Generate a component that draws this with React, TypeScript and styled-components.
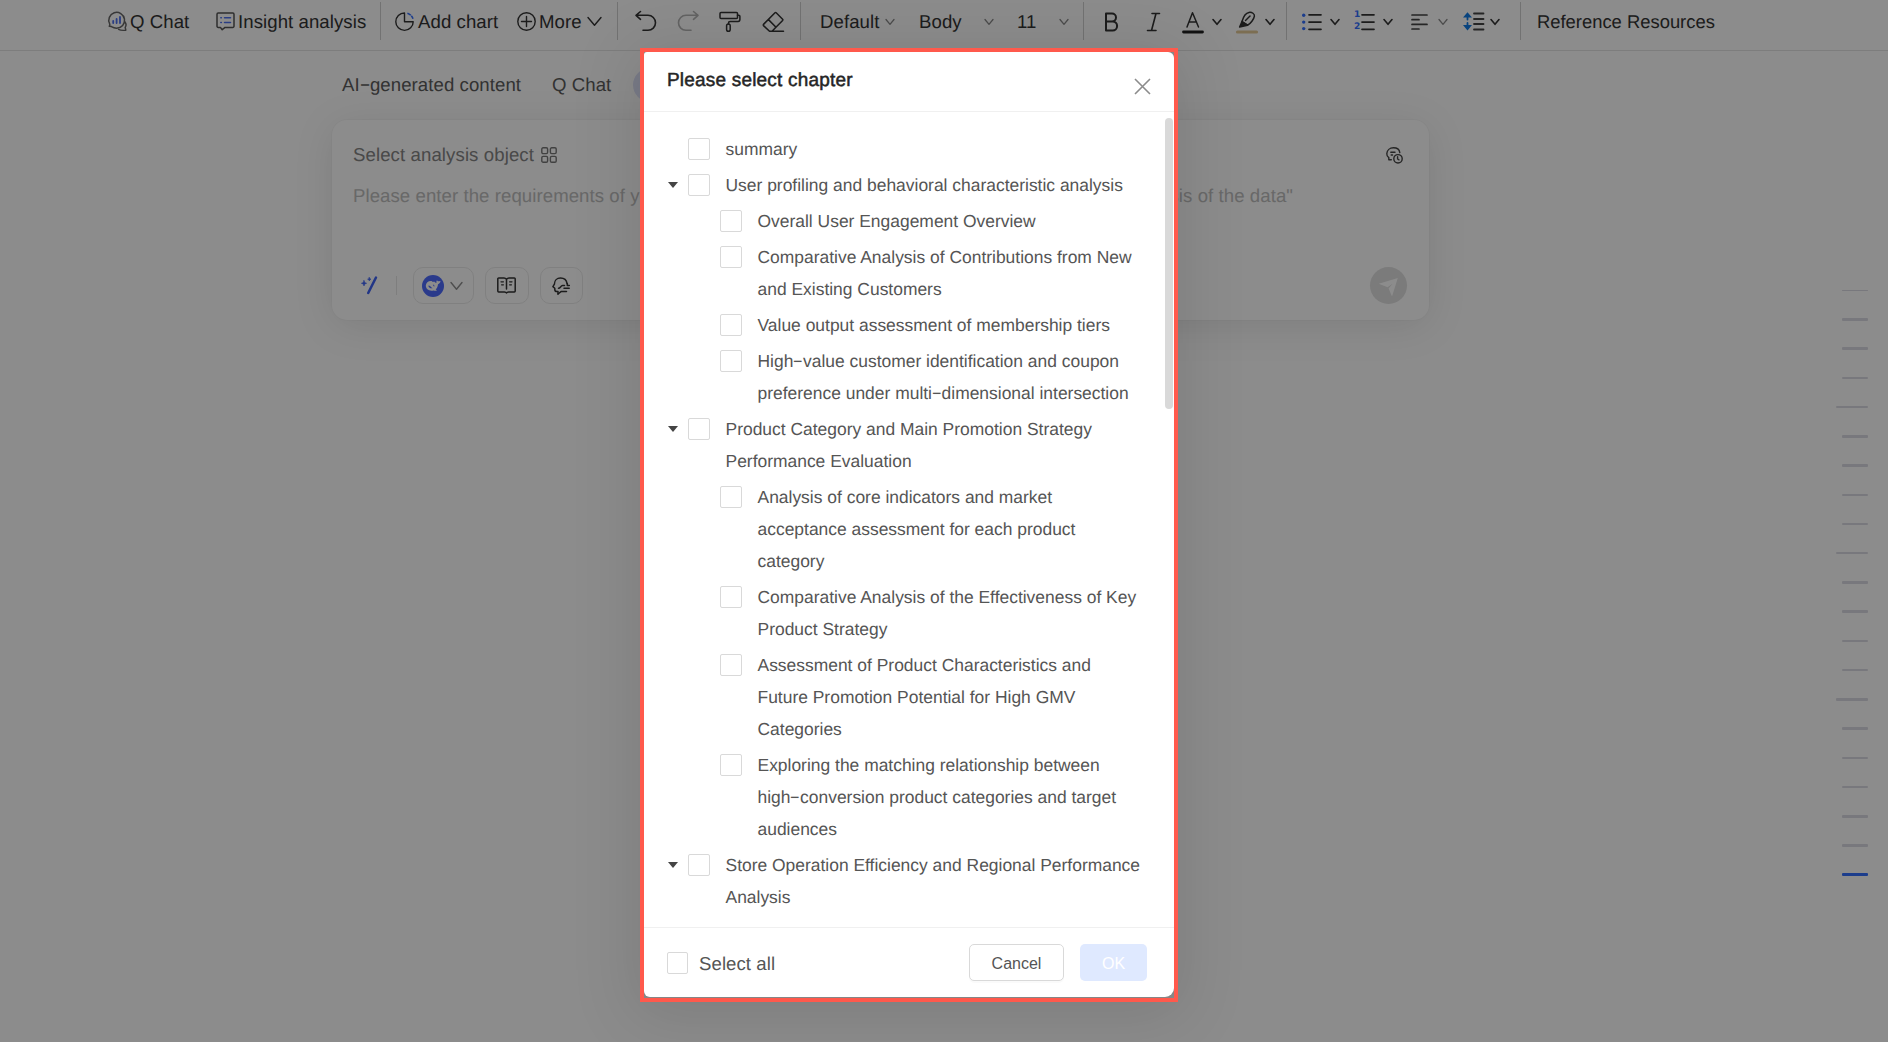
import React from "react";
import styled, { createGlobalStyle } from "styled-components";

const GlobalStyle = createGlobalStyle`
  * { box-sizing: border-box; }
  html, body { margin: 0; padding: 0; }
  body {
    background: #fff;
    overflow: hidden;
    font-family: "Liberation Sans", Arial, Helvetica, sans-serif;
    font-size: 18.6px;
    letter-spacing: 0.07px;
    color: #333;
    text-rendering: geometricPrecision;
  }
  svg { display: block; flex: none; overflow: visible; }
`;

const Page = styled.div`
  position: relative;
  width: 1888px;
  height: 1042px;
  overflow: hidden;
  display: flex;
  flex-direction: column;
`;

const Toolbar = styled.header`
  height: 51px;
  flex: none;
  display: flex;
  align-items: center;
  padding-bottom: 7px;
  border-bottom: 1px solid #e4e4e4;
`;

const Tool = styled.div<{ $w: number; $ml: number }>`
  flex: none;
  width: ${(p) => p.$w}px;
  margin-left: ${(p) => p.$ml}px;
  white-space: nowrap;
  line-height: 24px;
`;

const ReferenceLink = styled.a`
  margin-left: 16px;
  line-height: 24px;
  font-size: 18.4px;
  letter-spacing: 0;
  white-space: nowrap;
`;

const Divider = styled.i<{ $ml: number }>`
  flex: none;
  align-self: flex-start;
  width: 1px;
  height: 38px;
  margin: 2px 0 0 ${(p) => p.$ml}px;
  background: #d0d0d0;
`;

const Stage = styled.main`
  flex: 1;
  display: flex;
  justify-content: space-between;
  padding: 0 20px 0 332px;
`;

const Editor = styled.section`
  width: 1097px;
`;

const Tabs = styled.nav`
  height: 69px;
  display: flex;
  align-items: center;
  padding: 0 0 2px 10px;
  color: #5c5c5c;
`;

const Tab = styled.span<{ $w: number }>`
  width: ${(p) => p.$w}px;
  white-space: nowrap;
`;

const ActivePill = styled.span`
  width: 120px;
  height: 34px;
  border-radius: 17px;
  background: #dde0f6;
`;

const Card = styled.div`
  height: 200px;
  border-radius: 15px;
  background: #fff;
  box-shadow: 0 0 0 1px rgba(0, 0, 0, 0.02), 0 6px 40px rgba(0, 0, 0, 0.1);
  padding: 23px 22px 15px 21px;
  display: flex;
  flex-direction: column;
`;

const CardRow = styled.div<{ $h: number }>`
  display: flex;
  justify-content: space-between;
  align-items: center;
  height: ${(p) => p.$h}px;
  white-space: nowrap;
`;

const ObjectPicker = styled.span`
  display: flex;
  align-items: center;
  gap: 7px;
  color: #858585;
  letter-spacing: 0.1px;
`;

const HistoryButton = styled.span`
  padding-right: 4px;
`;

const Placeholder = styled.div`
  margin-top: 17px;
  height: 24px;
  line-height: 24px;
  display: flex;
  justify-content: space-between;
  padding-right: 114px;
  white-space: nowrap;
  color: #bdbdbd;
  letter-spacing: 0.07px;
`;

const CardActions = styled.div`
  margin-top: auto;
  height: 39px;
  display: flex;
  align-items: center;
`;

const Wand = styled.span`
  width: 44px;
  padding-left: 8px;
  border-right: 1px solid #e6e6e6;
`;

const Chip = styled.span<{ $w: number; $ml: number }>`
  width: ${(p) => p.$w}px;
  height: 37px;
  margin-left: ${(p) => p.$ml}px;
  padding-right: 2px;
  border: 1px solid #eaeaea;
  border-radius: 10px;
  display: flex;
  align-items: center;
  justify-content: center;
  gap: 6px;
`;

const SendButton = styled.span`
  width: 37px;
  height: 37px;
  border-radius: 50%;
  margin-left: auto;
  background: #e0e0e0;
  display: flex;
  align-items: center;
  justify-content: center;
`;

const Rail = styled.aside`
  padding-top: 224.5px;
  display: flex;
  flex-direction: column;
  align-items: flex-end;
`;

const RailMark = styled.div<{ $long?: boolean; $active?: boolean; $thin?: boolean }>`
  height: 29.24px;
  width: ${(p) => (p.$long ? 32 : 26)}px;
  display: flex;
  align-items: center;
  &::before {
    content: "";
    width: 100%;
    height: ${(p) => (p.$thin ? 1 : p.$active ? 3 : 2.5)}px;
    border-radius: 1px;
    background: ${(p) => (p.$active ? "#3370ff" : "#dbdbe3")};
  }
`;

const Mask = styled.div`
  position: absolute;
  inset: 0;
  background: rgba(0, 0, 0, 0.45);
  padding: 48px 0 0 640px;
`;

const Highlight = styled.div`
  width: 538px;
  height: 954px;
  border: 4px solid #ff594c;
  background: #868686;
  box-shadow: 0 8px 60px 8px rgba(0, 0, 0, 0.1);
`;

const Dialog = styled.div`
  width: 530px;
  height: 945px;
  border-radius: 3px 6px 9px 6px;
  background: #fff;
  display: flex;
  flex-direction: column;
  overflow: hidden;
`;

const DialogHeader = styled.div`
  height: 60px;
  flex: none;
  display: flex;
  justify-content: space-between;
  padding: 17px 23px 0 23px;
  border-bottom: 1px solid #f0f0f0;
`;

const Title = styled.h2`
  margin: 0;
  font-size: 19px;
  line-height: 24px;
  font-weight: 400;
  letter-spacing: 0.19px;
  color: #262626;
  -webkit-text-stroke: 0.5px #262626;
`;

const CloseIcon = styled.svg`
  margin-top: 9px;
`;

const DialogBody = styled.div`
  flex: 1;
  min-height: 0;
  display: flex;
  justify-content: space-between;
  padding: 21px 1px 0 23px;
`;

const Tree = styled.ul`
  list-style: none;
  margin: 0;
  padding: 0;
  display: flex;
  flex-direction: column;
  gap: 4px;
`;

const TreeRow = styled.li<{ $child?: boolean }>`
  display: flex;
  align-items: flex-start;
  padding-left: ${(p) => (p.$child ? 32 : 0)}px;
`;

const Caret = styled.span<{ $open?: boolean }>`
  width: 21px;
  height: 32px;
  display: flex;
  align-items: center;
  &::before {
    content: "";
    margin-left: 1px;
    border: 5px solid transparent;
    border-top: 6px solid ${(p) => (p.$open ? "#444" : "transparent")};
    border-bottom: 0;
  }
`;

const Checkbox = styled.span`
  flex: none;
  width: 22px;
  height: 22px;
  margin: 5px 15.5px 0 0;
  border: 1px solid #d9d9d9;
  border-radius: 2px;
  background: #fff;
`;

const Label = styled.span`
  font-size: 17.45px;
  line-height: 32px;
  letter-spacing: 0;
  color: #555;
`;

const Line = styled.span`
  display: block;
  white-space: nowrap;
`;

const Hyphen = styled.span`
  display: inline-block;
  width: 0.55em;
  text-align: center;
  transform: translateY(-1px) scaleX(1.8);
`;

const ScrollThumb = styled.div`
  width: 8px;
  height: 291px;
  margin-top: -15px;
  border-radius: 4px;
  background: #d9d9d9;
`;

const DialogFooter = styled.div`
  height: 70px;
  flex: none;
  display: flex;
  align-items: flex-start;
  padding: 16px 27px 0 23px;
  border-top: 1px solid #f0f0f0;
`;

const SelectAll = styled.label`
  display: flex;
  align-items: center;
  gap: 11px;
  height: 38px;
  color: #555;
  margin-right: auto;
`;

const SelectAllText = styled.span`
  padding-top: 2px;
`;

const FooterCheckbox = styled(Checkbox)`
  width: 21px;
  margin: 0;
`;

const Button = styled.button<{ $primary?: boolean }>`
  width: ${(p) => (p.$primary ? 67 : 95)}px;
  height: 37px;
  margin-left: ${(p) => (p.$primary ? 16 : 0)}px;
  padding: 2px 0 0;
  border: ${(p) => (p.$primary ? "0" : "1px solid #d9d9d9")};
  border-radius: 5px;
  background: ${(p) => (p.$primary ? "#dfe9ff" : "#fff")};
  color: ${(p) => (p.$primary ? "#fff" : "#555")};
  box-shadow: ${(p) => (p.$primary ? "none" : "0 2px 0 rgba(0, 0, 0, 0.02)")};
  font-family: inherit;
  font-size: 16px;
`;

const INK = "#333";
const BLUE = "#3370ff";
const GREY = "#8a8a8a";

const Svg = ({ w, h, children, stroke = INK, sw = 1.5 }: {
  w: number; h: number; children: React.ReactNode; stroke?: string; sw?: number;
}) => (
  <svg width={w} height={h} viewBox={`0 0 ${w} ${h}`} fill="none" stroke={stroke}
    strokeWidth={sw} strokeLinecap="round" strokeLinejoin="round">{children}</svg>
);

const Chevron = ({ w = 10, h = 6, color = INK, sw = 1.6 }) => (
  <Svg w={w} h={h} stroke={color} sw={sw}><path d={`M1 .5 L${w / 2} ${h - 0.7} L${w - 1} .5`} /></Svg>
);

const QChatIcon = () => (
  <Svg w={19} h={19} stroke="#666">
    <path d="M3.4 14.6 L1.2 14.2 C2 13.4 2 12.8 1.7 12 A7.9 7.9 0 1 1 8.6 16.2 C6.6 16.2 5 15.6 3.4 14.6" />
    <path d="M16.6 9.6 C18.4 11.6 18.4 13.6 17.2 15.4 L17.8 18.2 C14.6 18.6 12.4 18.4 10.6 17.4" />
    <path d="M5.2 9v2M8.6 7v4M12 5v6" stroke="#4c6ff0" strokeWidth="1.8" />
  </Svg>
);

const InsightIcon = () => (
  <Svg w={19} h={19} stroke="#555">
    <path d="M2.2 1h14.6a1.2 1.2 0 0 1 1.2 1.2v12a1.2 1.2 0 0 1-1.2 1.2H9l-2.8 2.4-1.8-2.4H2.2A1.2 1.2 0 0 1 1 14.2V2.2A1.2 1.2 0 0 1 2.2 1z" />
    <path d="M4.8 5.8h.6M8.5 5.8h6M4.8 10.4h.6M8.5 10.4h6" stroke="#4c6ff0" />
  </Svg>
);

const PieIcon = () => (
  <Svg w={19} h={19} sw={1.4}>
    <path d="M9.5 1V9.7H18.2A8.7 8.7 0 1 1 9.5 1" />
    <path d="M12.4 1.2A8.8 8.8 0 0 1 18 6.8" stroke={BLUE} strokeWidth="1.6" strokeDasharray="4 .7" strokeLinecap="butt" />
  </Svg>
);

const PlusIcon = () => (
  <Svg w={19} h={19} sw={1.4}><circle cx="9.5" cy="9.5" r="8.7" /><path d="M9.5 4.5v10M4.5 9.5h10" /></Svg>
);

const UndoIcon = () => (
  <Svg w={22} h={21} sw={1.6}><path d="M5.5 .5 L1 4.3 L5.5 8.3 M1.2 4.3H13a7.5 7.5 0 0 1 0 15H8" /></Svg>
);

const RedoIcon = () => (
  <Svg w={22} h={21} sw={1.6} stroke="#b4b4b4"><path d="M16.5 .5 L21 4.3 L16.5 8.3 M20.8 4.3H9a7.5 7.5 0 0 0 0 15H14" /></Svg>
);

const RollerIcon = () => (
  <Svg w={22} h={21}>
    <rect x="1" y="1.5" width="17.5" height="6" rx="1" />
    <path d="M18.5 4.2h1.2a1.2 1.2 0 0 1 1.2 1.2v3.2a1.8 1.8 0 0 1-1.8 1.8h-8a1.6 1.6 0 0 0-1.6 1.6v1" />
    <rect x="7.6" y="13" width="3.6" height="7.2" rx="1.8" />
  </Svg>
);

const EraserIcon = () => (
  <Svg w={22} h={22}>
    <path d="M7.5 20.3 L1.5 14.6 a.9.9 0 0 1 0-1.2 L13 1.8 a.9.9 0 0 1 1.2 0 L20.6 8.2 a.9.9 0 0 1 0 1.2 L10 20.3 M7.5 20.3H21.5M6.5 8.6 L14 16.2" />
  </Svg>
);

const BoldIcon = () => (
  <Svg w={14} h={20} sw={2}><path d="M2 1.5H8a3.9 3.9 0 0 1 0 8H2zM2 9.5H8.6a4.4 4.4 0 0 1 0 9H2z" /></Svg>
);

const ItalicIcon = () => (
  <Svg w={13} h={20} sw={1.6}><path d="M5 1.5H12.5M.5 18.5H9M9 1.5L4.5 18.5" /></Svg>
);

const FontColorIcon = () => (
  <Svg w={22} h={22}>
    <path d="M5 16 L10.5 1.8 L16.5 16M7 11H14.5" />
    <path d="M1.5 21H20.5" strokeWidth="2.8" stroke="#222" />
  </Svg>
);

const HighlightIcon = () => (
  <Svg w={22} h={22}>
    <path d="M6 10.5 C7.5 5 10.5 1.8 13 1.4 C16 1 18.8 2.8 18.4 5.2 C18 8 14.5 12.8 11.5 14.2 Z" />
    <path d="M6 10.5 L3.6 16 L11.5 14.2 Z" fill={INK} />
    <path d="M9.5 9.5L14 5" />
    <path d="M1.5 21H20.5" strokeWidth="3.2" stroke="#e2c896" />
  </Svg>
);

const BulletListIcon = () => (
  <Svg w={20} h={18} sw={1.7}>
    <path d="M7 1.8H19M7 9.1H19M7 16.3H19" />
    <g fill={BLUE} stroke="none"><circle cx="1.7" cy="2.3" r="1.7" /><circle cx="1.7" cy="9.1" r="1.7" /><circle cx="1.7" cy="15.6" r="1.7" /></g>
  </Svg>
);

const Digits = styled.div`
  display: flex;
  flex-direction: column;
  justify-content: space-between;
  height: 21px;
  width: 7px;
  font: bold 9px/9px "DejaVu Sans", sans-serif;
  color: ${BLUE};
`;

const NumberedList = styled.div`
  display: flex;
  align-items: center;
`;

const AlignIcon = () => (
  <Svg w={17} h={16} stroke="#444" sw={1.7}><path d="M1 1H16M1 5.7H8M1 10.4H16M1 15H8" /></Svg>
);

const LineHeightIcon = () => (
  <Svg w={21} h={19} sw={1.8}>
    <path d="M11 1.5H20.5M11 7H20.5M11 12H20.5M11 17.5H20.5" stroke="#444" />
    <path d="M4.5 4.5V7.5M4.5 11V14.5" stroke="#0f7ae5" />
    <path d="M0 5.6L4.5 .3L9 5.6zM0 13L4.5 18.4L9 13z" fill="#0f7ae5" stroke="none" />
  </Svg>
);

const ObjectIcon = () => (
  <Svg w={16} h={16} stroke="#777" sw={1.4}>
    <rect x=".8" y=".8" width="5.8" height="5.8" rx="1.3" /><rect x="9.4" y=".8" width="5.8" height="5.8" rx="1.3" />
    <rect x=".8" y="9.4" width="5.8" height="5.8" rx="1.3" /><rect x="9.4" y="9.4" width="5.8" height="5.8" rx="1.3" />
  </Svg>
);

const HistoryIcon = () => (
  <Svg w={17} h={17} stroke="#444" sw={1.4}>
    <path d="M5.3 12.8H2.8V10.6C1.4 9.6 .7 8.3 .8 6.6C1 3.2 3.8 .8 7.4 .8C10.8 .8 13.4 2.8 13.8 5.6" />
    <path d="M4.8 5.2H9M5.2 8H6.5" />
    <circle cx="12" cy="11.8" r="4.2" /><path d="M11.6 9.8V12L13 12.8" />
  </Svg>
);

const WandIcon = () => (
  <Svg w={18} h={19} stroke="#3f63f5" sw={0.6}>
    <path d="M15 1.5L7.2 17" strokeWidth="2.5" />
    <path d="M3 4.6L3.7 6.6L5.6 7.3L3.7 8L3 10L2.3 8L.4 7.3L2.3 6.6ZM8.3 1.5L8.8 2.7L10 3.2L8.8 3.7L8.3 4.9L7.8 3.7L6.6 3.2L7.8 2.7Z" fill="#3f63f5" />
  </Svg>
);

const WhaleIcon = () => (
  <svg width="22" height="22" viewBox="0 0 22 22">
    <circle cx="11" cy="11" r="11" fill="#4d6bfe" />
    <path d="M3.8 10.5C4 7.5 6.5 5.6 9.6 6L10.9 6.9L12.2 6.5C12.8 7 13.5 7.9 14.5 8.1C14.2 6.9 14.4 6 15 5.2C15.5 6 16 6.4 16.7 6.2L18.5 5.9C18.3 7.7 17.3 8.6 16 9.2C15.8 11.5 15 13.2 13.7 14.3L14.9 15.5C13.6 16 12.5 15.8 11.6 15.4C7.5 16.6 3.7 14.2 3.8 10.5Z" fill="#fff" />
    <path d="M6.4 10.4C8.2 10.4 9 12.4 10.6 13.3C8.200 13.600 6.300 12.300 6.400 10.400Z" fill="#4d6bfe" />
    <path d="M10.8 9.8C11.700 9.500 12.500 10.200 12.600 11.200L11.900 11.500Z" fill="#4d6bfe" />
  </svg>
);

const BookIcon = () => (
  <Svg w={19} h={17}>
    <path d="M9.5 2.2C8.8 1.3 8 .9 7 .9H1.7a.9.9 0 0 0-.9.9V14a.9.9 0 0 0 .9.9H7.5C8.5 14.9 9.2 15.3 9.5 16C9.8 15.3 10.5 14.9 11.5 14.9H17.3a.9.9 0 0 0 .9-.9V1.8a.9.9 0 0 0-.9-.9H12C11 .9 10.2 1.3 9.5 2.2ZM9.5 2.2V12" />
    <path d="M4 4.8H6.4M4.6 7.8H6.4M12.6 4.8H15M12.6 7.8H14.4" strokeWidth="1.3" />
  </Svg>
);

const ThinkIcon = () => (
  <Svg w={18} h={18}>
    <path d="M6 17V14.6H5A2.2 2.2 0 0 1 2.8 12.4V11.2L.9 9.6L2.4 7.2C2.4 3.5 5 1 8.5 1C12 1 14.6 3.3 15 6.5" />
    <path d="M15.3 6.5V8.5H17.3M12 11.3H17.2M6.5 11.3C8.5 11.3 8.6 8.6 10.6 8.6H12.5M6 17L9 14.6H14.5" />
  </Svg>
);

const SendIcon = () => (
  <svg width="20" height="20" viewBox="0 0 20 20" fill="#fff">
    <path d="M-.3 7.8L18.8 2L13 20.5L9.6 12.6L13.5 7.8L8.6 11.3Z" />
  </svg>
);

const chapters: { lines: string[]; child?: boolean; open?: boolean }[] = [
  { lines: ["summary"] },
  { lines: ["User profiling and behavioral characteristic analysis"], open: true },
  { lines: ["Overall User Engagement Overview"], child: true },
  { lines: ["Comparative Analysis of Contributions from New", "and Existing Customers"], child: true },
  { lines: ["Value output assessment of membership tiers"], child: true },
  { lines: ["High-value customer identification and coupon", "preference under multi-dimensional intersection"], child: true },
  { lines: ["Product Category and Main Promotion Strategy", "Performance Evaluation"], open: true },
  { lines: ["Analysis of core indicators and market", "acceptance assessment for each product", "category"], child: true },
  { lines: ["Comparative Analysis of the Effectiveness of Key", "Product Strategy"], child: true },
  { lines: ["Assessment of Product Characteristics and", "Future Promotion Potential for High GMV", "Categories"], child: true },
  { lines: ["Exploring the matching relationship between", "high-conversion product categories and target", "audiences"], child: true },
  { lines: ["Store Operation Efficiency and Regional Performance", "Analysis"], open: true },
];

const WithHyphens = ({ text }: { text: string }) => (
  <>
    {text.split("-").map((part, i) => (
      <React.Fragment key={i}>{i > 0 && <Hyphen>-</Hyphen>}{part}</React.Fragment>
    ))}
  </>
);

export default function App() {
  return (
    <>
      <GlobalStyle />
      <Page>
        <Toolbar>
          <Tool $ml={108} $w={19}><QChatIcon /></Tool>
          <Tool $ml={3} $w={60}>Q Chat</Tool>
          <Tool $ml={26} $w={19}><InsightIcon /></Tool>
          <Tool $ml={3} $w={129}>Insight analysis</Tool>
          <Divider $ml={13} />
          <Tool $ml={14} $w={19}><PieIcon /></Tool>
          <Tool $ml={4} $w={82}>Add chart</Tool>
          <Tool $ml={17} $w={19}><PlusIcon /></Tool>
          <Tool $ml={3} $w={45}>More</Tool>
          <Tool $ml={3} $w={15}><Chevron w={15} h={9} sw={1.4} /></Tool>
          <Divider $ml={15} />
          <Tool $ml={17} $w={22}><UndoIcon /></Tool>
          <Tool $ml={20} $w={22}><RedoIcon /></Tool>
          <Tool $ml={20} $w={22}><RollerIcon /></Tool>
          <Tool $ml={21} $w={22}><EraserIcon /></Tool>
          <Divider $ml={16} />
          <Tool $ml={19} $w={60}>Default</Tool>
          <Tool $ml={5} $w={10}><Chevron color={GREY} sw={1.3} /></Tool>
          <Tool $ml={24} $w={45}>Body</Tool>
          <Tool $ml={20} $w={10}><Chevron color={GREY} sw={1.3} /></Tool>
          <Tool $ml={23} $w={19}>11</Tool>
          <Tool $ml={23} $w={10}><Chevron color={GREY} sw={1.3} /></Tool>
          <Divider $ml={14} />
          <Tool $ml={20} $w={14}><BoldIcon /></Tool>
          <Tool $ml={29} $w={13}><ItalicIcon /></Tool>
          <Tool $ml={22} $w={22}><FontColorIcon /></Tool>
          <Tool $ml={8} $w={10}><Chevron /></Tool>
          <Tool $ml={14} $w={22}><HighlightIcon /></Tool>
          <Tool $ml={7} $w={10}><Chevron /></Tool>
          <Divider $ml={11} />
          <Tool $ml={15} $w={20}><BulletListIcon /></Tool>
          <Tool $ml={8} $w={10}><Chevron /></Tool>
          <Tool $ml={14} $w={21}>
            <NumberedList>
              <Digits><span>1</span><span>2</span></Digits>
              <Svg w={14} h={18} sw={1.7}><path d="M1 1.8H13M1 9.1H13M1 16.3H13" /></Svg>
            </NumberedList>
          </Tool>
          <Tool $ml={8} $w={10}><Chevron /></Tool>
          <Tool $ml={18} $w={17}><AlignIcon /></Tool>
          <Tool $ml={10} $w={10}><Chevron color={GREY} sw={1.3} /></Tool>
          <Tool $ml={15} $w={21}><LineHeightIcon /></Tool>
          <Tool $ml={6} $w={10}><Chevron /></Tool>
          <Divider $ml={20} />
          <ReferenceLink>Reference Resources</ReferenceLink>
        </Toolbar>

        <Stage>
          <Editor>
            <Tabs>
              <Tab $w={210}><WithHyphens text="AI-generated content" /></Tab>
              <Tab $w={81}>Q Chat</Tab>
              <ActivePill />
            </Tabs>
            <Card>
              <CardRow $h={24}>
                <ObjectPicker>Select analysis object <ObjectIcon /></ObjectPicker>
                <HistoryButton><HistoryIcon /></HistoryButton>
              </CardRow>
              <Placeholder>
                <span>Please enter the requirements of your</span>
                <span>analysis of the data"</span>
              </Placeholder>
              <CardActions>
                <Wand><WandIcon /></Wand>
                <Chip $ml={16} $w={61}><WhaleIcon /><Chevron w={13} h={8} color="#8f8f8f" sw={1.4} /></Chip>
                <Chip $ml={11} $w={44}><BookIcon /></Chip>
                <Chip $ml={11} $w={43}><ThinkIcon /></Chip>
                <SendButton><SendIcon /></SendButton>
              </CardActions>
            </Card>
          </Editor>
          <Rail>
            {Array.from({ length: 21 }, (_, i) => (
              <RailMark key={i} $thin={i === 0} $long={i === 4 || i === 9 || i === 14} $active={i === 20} />
            ))}
          </Rail>
        </Stage>

        <Mask>
          <Highlight>
            <Dialog role="dialog">
              <DialogHeader>
                <Title>Please select chapter</Title>
                <CloseIcon width="17" height="17" viewBox="0 0 17 17" stroke="#8c8c8c" strokeWidth="1.6">
                  <path d="M1 1L16 16M16 1L1 16" />
                </CloseIcon>
              </DialogHeader>
              <DialogBody>
                <Tree>
                  {chapters.map((c) => (
                    <TreeRow key={c.lines[0]} $child={c.child}>
                      <Caret $open={c.open} />
                      <Checkbox />
                      <Label>
                        {c.lines.map((l) => <Line key={l}><WithHyphens text={l} /></Line>)}
                      </Label>
                    </TreeRow>
                  ))}
                </Tree>
                <ScrollThumb />
              </DialogBody>
              <DialogFooter>
                <SelectAll><FooterCheckbox /><SelectAllText>Select all</SelectAllText></SelectAll>
                <Button>Cancel</Button>
                <Button $primary>OK</Button>
              </DialogFooter>
            </Dialog>
          </Highlight>
        </Mask>
      </Page>
    </>
  );
}
